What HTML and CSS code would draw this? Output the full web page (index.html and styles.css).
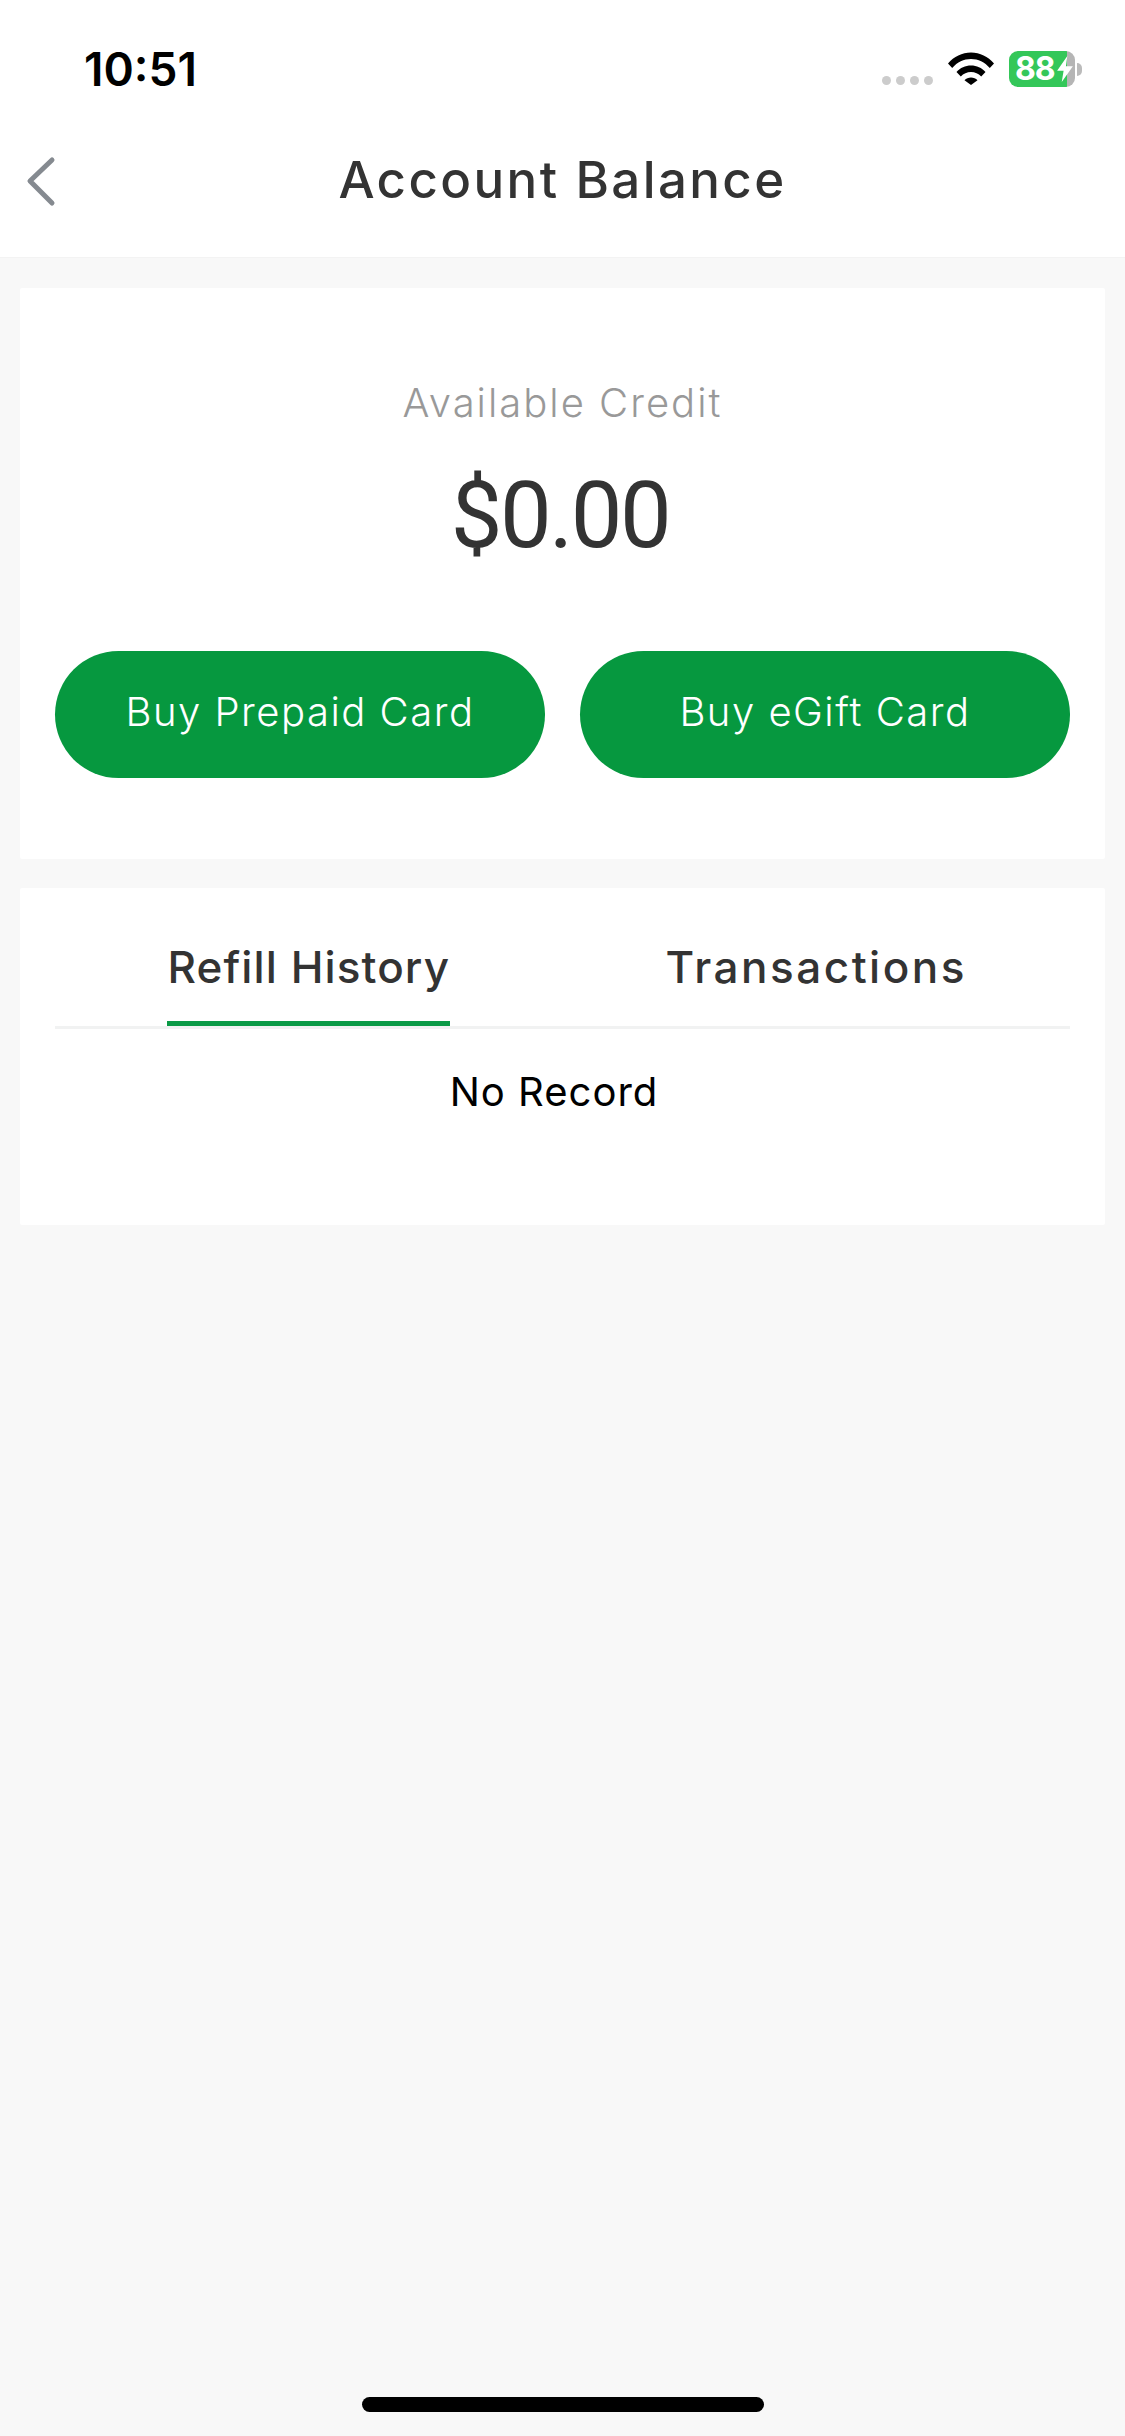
FILE: index.html
```html
<!DOCTYPE html>
<html lang="en">
<head>
    <meta charset="UTF-8">
    <meta name="viewport" content="width=device-width, initial-scale=1.0">
    <title>Account Balance</title>
    <link rel="stylesheet" href="styles.css">
</head>
<body>
    <header class="top">
        <div class="status">
            <span class="time">10:51</span>
            <div class="status-icons">
                <div class="dots"><i></i><i></i><i></i><i></i></div>
                <svg class="wifi" width="46" height="33" viewBox="0 0 46 33">
                    <path d="M0 11.5C6 4.5 14 .5 23 .5s17 4 23 11l-4.2 4.4C36.600 10.200 30.300 7 23 7S9.400 10.200 4.200 15.900Z"/>
                    <path d="M8.500 20C12.300 16 17.300 13.600 23 13.600S33.700 16 37.500 20l-4.300 4.400C30.500 21.600 27 20 23 20s-7.500 1.600-10.200 4.400Z"/>
                    <path d="M16.500 28.300C18.200 26.600 20.500 25.600 23 25.600s4.800 1 6.500 2.700L23 33Z"/>
                </svg>
                <div class="battery">
                    <div class="battery-body">
                        <span>88</span>
                        <svg width="16" height="26" viewBox="0 0 17 28"><path d="M11 0 0 16h7L5 28l12-17H9.500Z"/></svg>
                    </div>
                    <div class="battery-nub"></div>
                </div>
            </div>
        </div>
        <nav class="nav">
            <svg class="back" width="30" height="52" viewBox="0 0 30 52">
                <path d="M26 5 4 26l22 22"/>
            </svg>
            <h1>Account Balance</h1>
        </nav>
    </header>

    <main>
        <section class="card balance">
            <p class="label">Available Credit</p>
            <p class="amount">$0.00</p>
            <div class="buttons">
                <button type="button">Buy Prepaid Card</button>
                <button type="button">Buy eGift Card</button>
            </div>
        </section>

        <section class="card history">
            <div class="tabs">
                <div class="tab"><span class="tab-active">Refill History</span></div>
                <div class="tab"><span>Transactions</span></div>
            </div>
            <p class="empty">No Record</p>
        </section>
    </main>

    <div class="home-bar"></div>
</body>
</html>
```

FILE: styles.css
```css
*{
    margin: 0;
    padding: 0;
    box-sizing: border-box;
}
body{
    position: relative;
    height: 2436px;
    overflow: hidden;
    background-color: #f8f8f8;
    font-family: Inter, "Noto Sans", sans-serif;
    color: #333;
}
.top{
    height: 258px;
    background-color: #fff;
    border-bottom: 1px solid #f3f3f3;
}
.status{
    height: 118px;
    padding: 0 43px 0 84px;
    display: flex;
    justify-content: space-between;
    align-items: flex-start;
}
.time{
    margin-top: 43px;
    font-size: 46px;
    line-height: 52px;
    font-weight: 600;
    color: #000;
}
.status-icons{
    margin-top: 51px;
    display: flex;
    align-items: flex-start;
}
.dots{
    margin-top: 25px;
    margin-right: 15px;
    display: flex;
    gap: 5px;
}
.dots i{
    width: 9px;
    height: 9px;
    border-radius: 50%;
    background-color: #ccc;
}
.wifi{
    margin-top: 1px;
    margin-right: 15px;
    fill: #000;
}
.battery{
    display: flex;
    align-items: center;
}
.battery-body{
    width: 66px;
    height: 36px;
    padding-left: 6px;
    border-radius: 9px;
    background: linear-gradient(to right, #34c759 58px, #b5b5b5 58px);
    display: flex;
    align-items: center;
    color: #fff;
    font-size: 32px;
    line-height: 36px;
    font-weight: 700;
    letter-spacing: -1px;
}
.battery-body svg{
    flex-shrink: 0;
    margin-left: 2px;
    fill: #fff;
}
.battery-nub{
    width: 5px;
    height: 13px;
    margin-left: 2px;
    border-radius: 0 5px 5px 0;
    background-color: #bbb;
}
.nav{
    position: relative;
    height: 122px;
    display: flex;
    justify-content: center;
    align-items: flex-start;
}
.back{
    position: absolute;
    left: 26px;
    top: 37px;
    fill: none;
    stroke: #858a90;
    stroke-width: 5;
    stroke-linecap: round;
    stroke-linejoin: round;
}
h1{
    margin-top: 33px;
    font-size: 51px;
    line-height: 58px;
    font-weight: 500;
    letter-spacing: 2.4px;
    color: #333;
}
main{
    padding: 30px 20px 0;
    display: flex;
    flex-direction: column;
    gap: 29px;
}
.card{
    background-color: #fff;
    border-radius: 2px;
}
.balance{
    height: 571px;
    padding: 90px 35px 0;
}
.label{
    text-align: center;
    font-size: 40px;
    line-height: 50px;
    font-weight: 300;
    letter-spacing: 2px;
    color: #999;
}
.amount{
    margin-top: 34px;
    padding-right: 5px;
    text-align: center;
    font-family: Roboto, sans-serif;
    font-size: 92px;
    line-height: 108px;
    letter-spacing: -2.5px;
    color: #333;
}
.buttons{
    margin-top: 81px;
    display: grid;
    grid-template-columns: 490px 490px;
    justify-content: space-between;
}
button{
    height: 127px;
    padding-bottom: 6px;
    border: none;
    border-radius: 64px;
    background-color: #06983f;
    color: #fff;
    font-family: Inter, sans-serif;
    font-size: 40px;
    font-weight: 300;
    letter-spacing: 1.5px;
}
.history{
    height: 337px;
    padding: 0 35px;
}
.tabs{
    height: 141px;
    display: grid;
    grid-template-columns: 1fr 1fr;
    border-bottom: 3px solid #f1f2f2;
}
.tab{
    display: flex;
    justify-content: center;
}
.tab span{
    height: 138px;
    padding-top: 51px;
    white-space: nowrap;
    font-size: 44px;
    line-height: 56px;
    font-weight: 500;
    letter-spacing: 2.5px;
    color: #333;
}
.tab .tab-active{
    border-bottom: 5px solid #0a9a46;
    letter-spacing: 1.1px;
}
.empty{
    margin-top: 38px;
    padding-right: 17px;
    text-align: center;
    font-size: 40px;
    line-height: 50px;
    letter-spacing: 1px;
    color: #000;
}
.home-bar{
    position: absolute;
    left: 362px;
    top: 2397px;
    width: 402px;
    height: 15px;
    border-radius: 8px;
    background-color: #000;
}
```
